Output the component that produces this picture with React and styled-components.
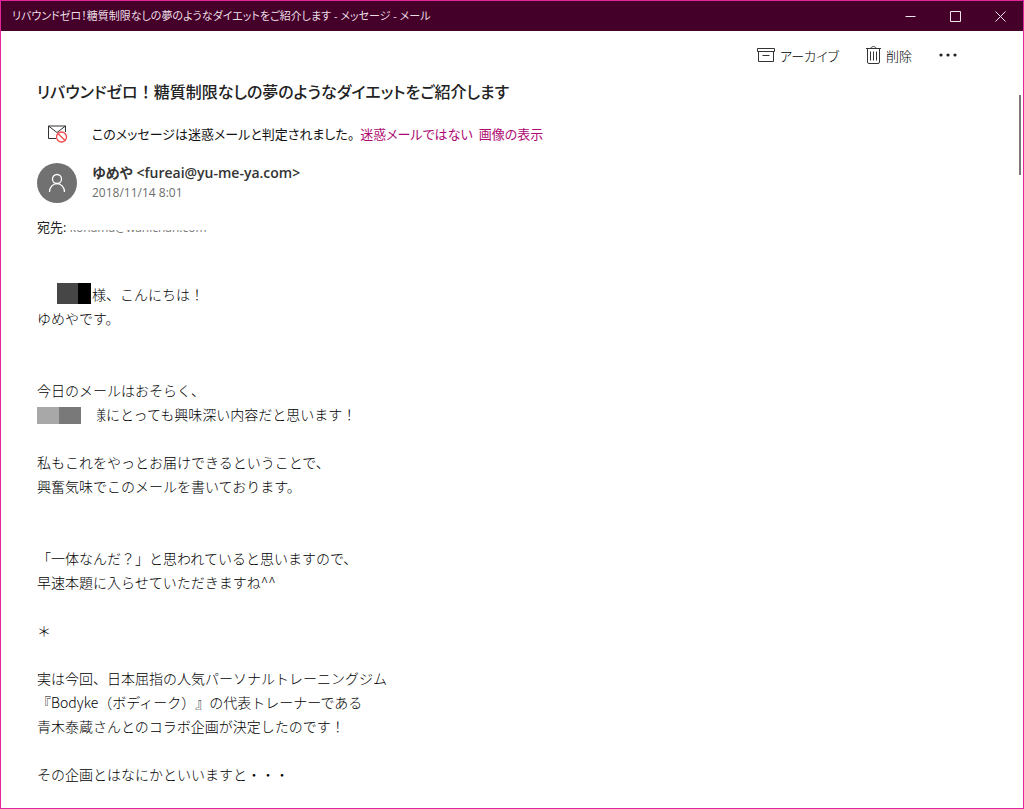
import React from "react";
import styled, { createGlobalStyle } from "styled-components";

const subject = "リバウンドゼロ！糖質制限なしの夢のようなダイエットをご紹介します";

function TitleBar() {
  return (
    <TitleBarStyle>
      <span>{subject} - メッセージ - メール</span>
      <div>
        <CaptionButton type="button" aria-label="最小化">
          <svg width="11" height="11" viewBox="0 0 11 11">
            <path d="M0.5 5.5h10" />
          </svg>
        </CaptionButton>
        <CaptionButton type="button" aria-label="最大化">
          <svg width="11" height="11" viewBox="0 0 11 11">
            <path d="M0.5 0.5h10v10h-10z" />
          </svg>
        </CaptionButton>
        <CaptionButton type="button" aria-label="閉じる">
          <svg width="11" height="11" viewBox="0 0 11 11">
            <path d="M0.5 0.5l10 10M10.5 0.5l-10 10" />
          </svg>
        </CaptionButton>
      </div>
    </TitleBarStyle>
  );
}

function Toolbar() {
  return (
    <ToolbarStyle>
      <ToolButton type="button">
        <svg width="18" height="15" viewBox="0 0 18 15">
          <path d="M0.5 0.5h17v3h-17zM1.5 3.5v10h15v-10M5.500 7.500h7" />
        </svg>
        アーカイブ
      </ToolButton>
      <ToolButton type="button">
        <svg width="15" height="18" viewBox="0 0 15 18">
          <path d="M0 2.5h15M5 2.5c0-2.600 5-2.600 5 0M1.500 2.500v13.500q0 1.500 1.500 1.500h9q1.500 0 1.500-1.500v-13.500M4.500 5.500v9M7.500 5.500v9M10.500 5.500v9" />
        </svg>
        削除
      </ToolButton>
      <ToolButton type="button" aria-label="その他の操作">
        <svg width="18" height="4" viewBox="0 0 18 4">
          <g fill="#222" stroke="none">
            <circle cx="2" cy="2" r="1.600" />
            <circle cx="9" cy="2" r="1.600" />
            <circle cx="16" cy="2" r="1.600" />
          </g>
        </svg>
      </ToolButton>
    </ToolbarStyle>
  );
}

function JunkIcon() {
  return (
    <svg width="20" height="18" viewBox="0 0 20 18" fill="none">
      <path
        d="M8 13.500H0.500v-12.500h17v6M0.500 1l8.500 6.500 8.500-6.500"
        stroke="#333"
      />
      <circle cx="13.500" cy="12" r="5" fill="#fff" stroke="#f0484c" strokeWidth="1.300" />
      <path d="M10 8.500l7 7" stroke="#f0484c" strokeWidth="1.300" />
    </svg>
  );
}

function Avatar() {
  return (
    <AvatarStyle>
      <svg width="18" height="20" viewBox="0 0 18 20" fill="none" stroke="#fff" strokeWidth="1.300">
        <circle cx="9" cy="6" r="4.500" />
        <path d="M1.500 19c0-4.700 3.200-8.300 7.500-8.300s7.500 3.600 7.500 8.300" />
      </svg>
    </AvatarStyle>
  );
}

function App() {
  const [lead, rest] = subject.split("！");

  return (
    <Window>
      <GlobalStyle />
      <TitleBar />
      <Toolbar />
      <Message>
        <Subject>
          {lead}
          <FullWidth>！</FullWidth>
          {rest}
        </Subject>
        <Notice>
          <NoticeIcon>
            <JunkIcon />
          </NoticeIcon>
          <span>このメッセージは迷惑メールと判定されました。</span>
          <a href="#not-junk">迷惑メールではない</a>
          <a href="#show-images">画像の表示</a>
        </Notice>
        <Sender>
          <Avatar />
          <div>
            <SenderName>ゆめや &lt;fureai@yu-me-ya.com&gt;</SenderName>
            <SentDate>2018/11/14 8:01</SentDate>
          </div>
        </Sender>
        <Recipient>
          宛先: <HiddenAddress>konama@wanichan.com</HiddenAddress>
        </Recipient>
        <Body>
          <p className="wide">
            <FirstName />
            様、こんにちは！
            <br />
            ゆめやです。
          </p>
          <p>
            今日のメールはおそらく、
            <br />
            <SecondName />
            様にとっても興味深い内容だと思います！
          </p>
          <p className="wide">
            私もこれをやっとお届けできるということで、
            <br />
            興奮気味でこのメールを書いております。
          </p>
          <p>
            「一体なんだ？」と思われていると思いますので、
            <br />
            早速本題に入らせていただきますね^^
          </p>
          <p>＊</p>
          <p>
            実は今回、日本屈指の人気パーソナルトレーニングジム
            <br />
            『Bodyke（ボディーク）』の代表トレーナーである
            <br />
            青木泰蔵さんとのコラボ企画が決定したのです！
          </p>
          <p>その企画とはなにかといいますと・・・</p>
        </Body>
      </Message>
      <ScrollThumb />
    </Window>
  );
}

export default App;

const GlobalStyle = createGlobalStyle`
  * {
    box-sizing: border-box;
  }

  body {
    margin: 0;
    background: #ffffff;
    color: #222222;
    font-family: "Open Sans", "Noto Sans CJK JP", sans-serif;
    font-feature-settings: "palt";
  }

  button {
    border: 0;
    padding: 0;
    background: transparent;
    font: inherit;
    font-feature-settings: inherit;
    color: inherit;
    cursor: pointer;
  }
`;

const Window = styled.div`
  position: relative;
  min-height: 100vh;
  border: 1px solid #e3259a;
`;

const TitleBarStyle = styled.header`
  display: flex;
  justify-content: space-between;
  height: 30px;
  padding-left: 11px;
  background: #450029;
  color: #eadfe6;
  font-size: 11px;
  line-height: 29px;

  div {
    display: flex;
  }
`;

const CaptionButton = styled.button`
  display: flex;
  align-items: center;
  justify-content: center;
  width: 45px;

  svg {
    fill: none;
    stroke: #f0e6ec;
  }
`;

const ToolbarStyle = styled.div`
  display: flex;
  justify-content: flex-end;
  gap: 27px;
  height: 48px;
  padding-right: 66px;
`;

const ToolButton = styled.button`
  display: flex;
  align-items: center;
  gap: 5px;
  font-size: 13px;
  font-weight: 300;
  color: #000000;

  svg {
    fill: none;
    stroke: #333333;
  }
`;

const Message = styled.main`
  padding: 0 36px;
`;

const Subject = styled.h1`
  margin: 0;
  font-size: 16px;
  font-weight: 500;
  line-height: 24px;
`;

const FullWidth = styled.span`
  font-family: "Noto Sans CJK JP", sans-serif;
  font-feature-settings: normal;
`;

const Notice = styled.div`
  display: flex;
  align-items: center;
  gap: 6px;
  margin-top: 18px;
  font-size: 13px;
  line-height: 24px;
  color: #111111;

  a {
    color: #ad0a72;
    text-decoration: none;
  }
`;

const NoticeIcon = styled.div`
  display: flex;
  width: 49px;
  padding-left: 11px;
`;

const Sender = styled.div`
  display: flex;
  gap: 15px;
  margin-top: 17px;
`;

const AvatarStyle = styled.div`
  display: flex;
  align-items: center;
  justify-content: center;
  width: 40px;
  height: 40px;
  border-radius: 50%;
  background: #717171;
`;

const SenderName = styled.div`
  font-size: 14px;
  font-weight: 600;
  line-height: 20px;
  color: #333333;
`;

const SentDate = styled.div`
  font-size: 12px;
  line-height: 20px;
  color: #6e6e6e;
`;

const Recipient = styled.div`
  margin-top: 15px;
  font-size: 13px;
  line-height: 18px;
`;

/* only the lower edge of the address stays visible */
const HiddenAddress = styled.span`
  position: relative;
  font-size: 12px;
  color: #777777;

  &::after {
    content: "";
    position: absolute;
    inset: 0 0 6px;
    background: #ffffff;
  }
`;

const Body = styled.article`
  margin-top: 45px;
  font-family: "Noto Sans CJK JP", sans-serif;
  font-feature-settings: normal;
  text-spacing-trim: space-all;
  font-size: 14px;
  font-weight: 300;
  line-height: 24px;
  color: #000000;

  p {
    margin: 0 0 24px;
  }

  p.wide {
    margin-bottom: 48px;
  }

  p:last-child {
    margin-bottom: 20px;
  }
`;

const Redaction = styled.span`
  display: inline-block;
  vertical-align: text-bottom;
`;

const FirstName = styled(Redaction)`
  width: 34px;
  height: 21px;
  margin: 0 1px 0 20px;
  background: linear-gradient(to right, #464646 21px, #000000 21px);
`;

const SecondName = styled(Redaction)`
  position: relative;
  width: 44px;
  height: 17px;
  margin-right: 11px;
  background: linear-gradient(to right, #a8a8a8 22px, #797979 22px);

  &::after {
    content: "";
    position: absolute;
    left: 44px;
    width: 16px;
    height: 17px;
    background: #ffffff;
  }
`;

const ScrollThumb = styled.div`
  position: absolute;
  top: 94px;
  right: 2px;
  width: 2px;
  height: 80px;
  background: #7a7a7a;
`;
